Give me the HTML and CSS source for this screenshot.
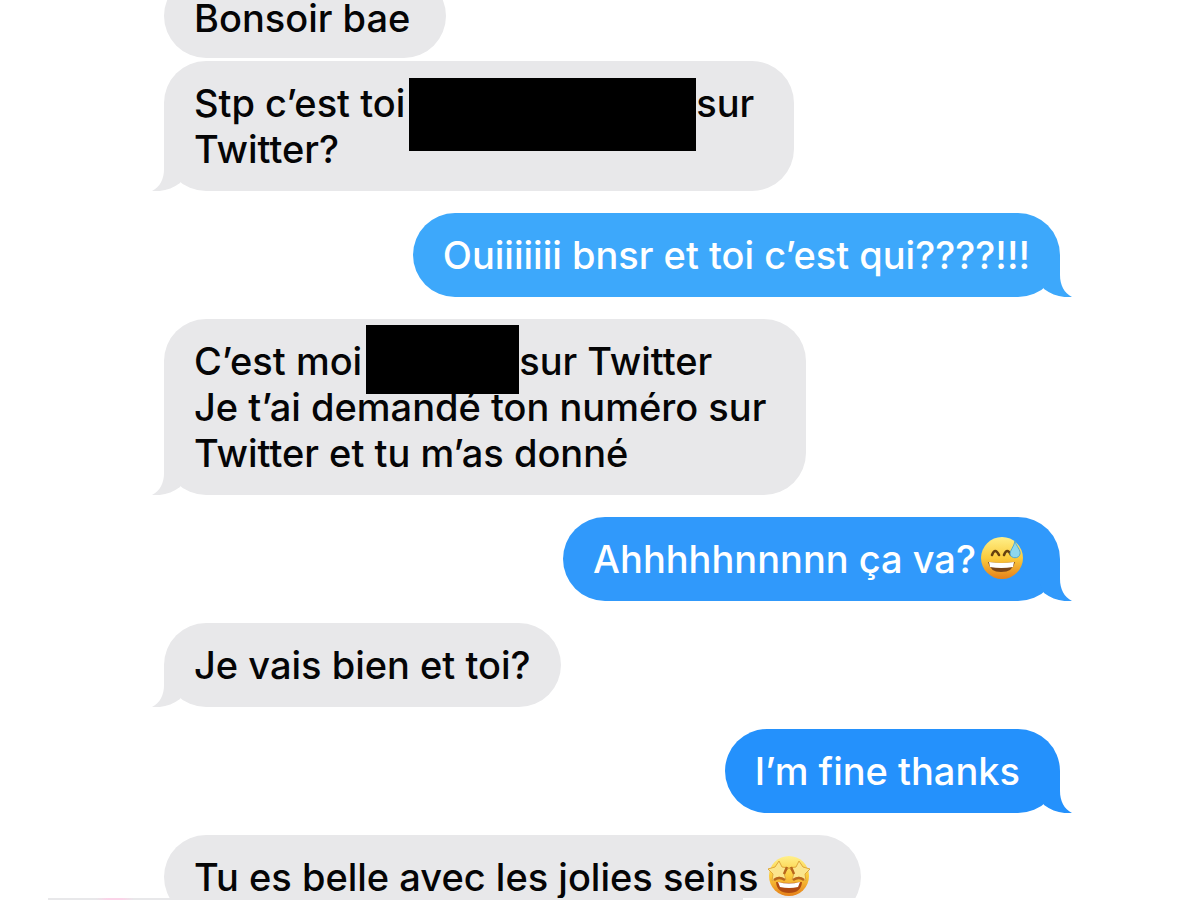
FILE: index.html
```html
<!DOCTYPE html>
<html lang="fr">
<head>
    <meta charset="UTF-8">
    <meta name="viewport" content="width=device-width, initial-scale=1.0">
    <title>Messages</title>
    <link rel="stylesheet" href="styles.css">
</head>
<body>
    <main class="chat">
        <div class="message received grouped">
            <p>Bonsoir bae</p>
        </div>

        <div class="message received wrapped">
            <p>Stp c’est toi<span class="hidden-name long"><span class="cover"></span></span>sur<br>Twitter?</p>
            <svg class="tail" viewBox="0 0 34 42" aria-hidden="true"><path d="M12 0 V20 C12 30 8 38 0 42 C10 43 20 40 28 34 L34 20 V0 Z"/></svg>
        </div>

        <div class="message sent light">
            <p>Ouiiiiiii bnsr et toi c’est qui????!!!</p>
            <svg class="tail" viewBox="0 0 34 42" aria-hidden="true"><path d="M12 0 V20 C12 30 8 38 0 42 C10 43 20 40 28 34 L34 20 V0 Z"/></svg>
        </div>

        <div class="message received wrapped">
            <p>C’est moi<span class="hidden-name short"><span class="cover"></span></span>sur Twitter<br>Je t’ai demandé ton numéro sur<br>Twitter et tu m’as donné</p>
            <svg class="tail" viewBox="0 0 34 42" aria-hidden="true"><path d="M12 0 V20 C12 30 8 38 0 42 C10 43 20 40 28 34 L34 20 V0 Z"/></svg>
        </div>

        <div class="message sent medium">
            <p>Ahhhhhnnnnn ça va?<svg class="emoji" viewBox="0 0 44 44" role="img" aria-label="sourire avec goutte de sueur">
                <defs>
                    <linearGradient id="face" x1="0" y1="0" x2="0" y2="1">
                        <stop offset="0" stop-color="#fff08a"/>
                        <stop offset="0.5" stop-color="#fbcb3c"/>
                        <stop offset="1" stop-color="#e5801a"/>
                    </linearGradient>
                </defs>
                <circle cx="22" cy="22" r="21" fill="url(#face)"/>
                <path d="M12 19 Q15 11 19 19 M24 19 Q27 11 31 19" fill="none" stroke="#65400f" stroke-width="2.6" stroke-linecap="round"/>
                <path d="M8 26 Q22 28 35 26 Q33 36 21 36 Q10 36 8 26 Z" fill="#7a451a"/>
                <path d="M9 26 Q22 28 34 26 L33 31 Q21 33 10 31 Z" fill="#fff"/>
                <path d="M35 5 C36 10 41 14 40 18 C39 23 31 23 30 18 C30 14 34 11 35 5 Z" fill="#8dd7ee" stroke="#53a9cf" stroke-width="1"/>
            </svg></p>
            <svg class="tail" viewBox="0 0 34 42" aria-hidden="true"><path d="M12 0 V20 C12 30 8 38 0 42 C10 43 20 40 28 34 L34 20 V0 Z"/></svg>
        </div>

        <div class="message received">
            <p>Je vais bien et toi?</p>
            <svg class="tail" viewBox="0 0 34 42" aria-hidden="true"><path d="M12 0 V20 C12 30 8 38 0 42 C10 43 20 40 28 34 L34 20 V0 Z"/></svg>
        </div>

        <div class="message sent dark wrapped">
            <p>I’m fine thanks</p>
            <svg class="tail" viewBox="0 0 34 42" aria-hidden="true"><path d="M12 0 V20 C12 30 8 38 0 42 C10 43 20 40 28 34 L34 20 V0 Z"/></svg>
        </div>

        <div class="message received">
            <p>Tu es belle avec les jolies seins<svg class="emoji apart" viewBox="0 0 44 44" role="img" aria-label="yeux en étoiles">
                <circle cx="22" cy="22" r="20" fill="url(#face)"/>
                <path d="M12 7 L15 13 L22 14 L17 19 L19 26 L12 23 L5 27 L6 20 L1 15 L8 13 Z M32 7 L36 13 L43 15 L38 20 L39 27 L32 23 L25 26 L27 19 L22 14 L29 13 Z" fill="#fbe58c" stroke="#e0a83a" stroke-width="1"/>
                <path d="M17 20 L20 13 M24 13 L27 20 M7 26 Q12 22 18 26 M26 26 Q32 22 37 26" fill="none" stroke="#b8661c" stroke-width="2.4"/>
                <path d="M9 28 Q22 30 35 28 Q34 39 22 39 Q10 39 9 28 Z" fill="#b04a12"/>
                <path d="M11 28 Q22 31 33 28 L31 33 Q22 35 13 33 Z" fill="#fff"/>
            </svg></p>
        </div>
    </main>
    <div class="bottom-line"></div>
</body>
</html>
```
FILE: styles.css
```css
* {
    box-sizing: border-box;
}
body {
    margin: 0;
    height: 100vh;
    overflow: hidden;
    background-color: #fff;
    color: #050506;
    font-family: Inter, "Liberation Sans", sans-serif;
    font-size: 38px;
    font-weight: 500;
    line-height: 46px;
}
.chat {
    display: flex;
    flex-direction: column;
    align-items: flex-start;
    gap: 22px;
    margin-top: -26px;
    padding: 0 140px 0 164px;
}
.message {
    position: relative;
    flex-shrink: 0;
    padding: 19px 30px;
    border-radius: 42px;
}
.message p {
    margin: 0;
    white-space: nowrap;
}
.received {
    background-color: #e8e8ea;
    fill: #e8e8ea;
}
.sent {
    align-self: flex-end;
    color: #fff;
}
.light {
    background-color: #3da8fb;
    fill: #3da8fb;
}
.medium {
    background-color: #3099fb;
    fill: #3099fb;
    padding-right: 36px;
}
.dark {
    background-color: #2491fc;
    fill: #2491fc;
}
.grouped {
    margin-bottom: -19px;
    padding: 21px 36px 17px 30px;
}
.wrapped {
    padding-right: 40px;
}
/* small hook at the bottom corner of the bubble */
.tail {
    position: absolute;
    left: -12px;
    bottom: 0;
    width: 34px;
    height: 42px;
}
.sent .tail {
    left: auto;
    right: -12px;
    transform: scaleX(-1);
}
.hidden-name {
    display: inline-block;
    position: relative;
    height: 46px;
    margin-left: 4px;
    vertical-align: top;
}
.cover {
    position: absolute;
    left: 0;
    width: 100%;
    z-index: 1;
    background-color: #000;
}
.long {
    width: 287px;
}
.long .cover {
    top: -2px;
    height: 73px;
}
.short {
    width: 153px;
}
.short .cover {
    top: -13px;
    height: 69px;
}
.emoji {
    display: inline-block;
    width: 44px;
    height: 44px;
    margin-left: 4px;
    vertical-align: top;
}
.apart {
    margin: 0 20px 0 8px;
}
/* thin edge of the keyboard area */
.bottom-line {
    position: fixed;
    left: 48px;
    right: 340px;
    bottom: 0;
    height: 2px;
    background: linear-gradient(to right, #e8e8ea 48px, #fbd3e8 60px, #fbd3e8 74px, #e8e8ea 86px, #e8e8ea 695px, #fff 695px);
}
```
